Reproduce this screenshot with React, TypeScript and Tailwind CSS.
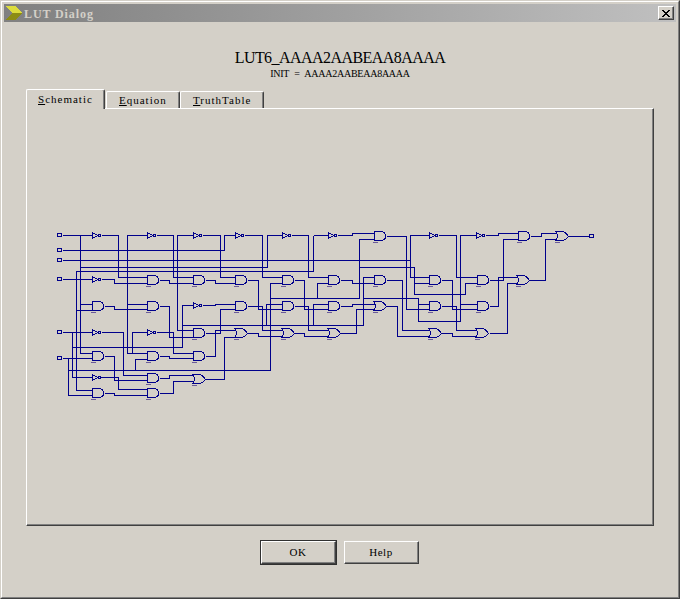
import React from 'react';

const serif = "font-['Liberation_Serif',serif]";

const wires = [
  '62,235 92,235', '80,235 80,353 92,353', '101,235 118,235 118,277 147,277',
  '62,250 224,250 224,235 235,235', '62,260 410,260', '429,235 410,235 410,277 429,277',
  '80,267 267,267 267,235 282,235', '313,235 313,271 76,271 76,390 92,390',
  '328,235 313,235', '62,279 92,279', '101,279 114,279 114,283 147,283',
  '147,235 127,235 127,353 147,353', '156,235 173,235 173,277 193,277',
  '193,235 177,235 177,330 193,330', '202,235 220,235 220,277 235,277',
  '159,280 169,280 169,283 193,283', '205,280 215,280 215,283 235,283',
  '80,304 92,304', '76,310 92,310', '104,306 114,306 114,309 147,309', '127,304 147,304',
  '159,306 169,306 169,337 193,337', '62,332 92,332', '72,332 72,377 92,377',
  '72,347 182,347 182,305 193,305', '101,332 123,332 123,375 147,375',
  '147,332 132,332 132,353', '156,332 173,332 173,353 193,353',
  '202,305 215,305 215,304 235,304', '205,333 220,333 220,309 235,309',
  '205,356 215,356 215,330 235,330', '205,379 224,379 224,337 235,337',
  '159,356 169,356 169,358 193,358', '104,356 114,356 114,380 147,380', '62,358 92,358',
  '68,358 68,395 92,395', '100,377 118,377 118,389 147,389', '104,393 114,393 114,395 147,395',
  '147,359 135,359 135,370', '67,370 270,370 270,283 282,283',
  '159,378 169,378 169,375 193,375', '159,393 173,393 173,381 193,381',
  '182,325 363,325 363,277 374,277', '244,235 262,235 262,277 282,277',
  '291,235 308,235 308,277 328,277', '337,235 352,235 352,233 374,233',
  '270,298 359,298', '374,239 359,239 359,298', '386,236 406,236 406,309 429,309',
  '358,267 414,267 414,294 465,294 465,283 477,283', '414,283 429,283',
  '247,280 258,280 258,309 282,309', '294,280 304,280 304,309 328,309',
  '340,280 352,280 352,283 374,283', '340,306 352,306 352,304 374,304',
  '247,306 262,306 262,330 282,330', '294,306 308,306 308,330 328,330',
  '266,325 266,304 282,304', '313,325 313,304 328,304', '317,298 317,283 328,283',
  '340,333 356,333 356,309 374,309', '294,333 304,333 304,336 328,336',
  '247,333 258,333 258,336 282,336', '386,306 397,306 397,336 429,336',
  '386,280 402,280 402,330 429,330', '363,298 418,298 418,321 460,321', '418,304 429,304',
  '438,235 456,235 456,277 477,277', '476,235 460,235 460,321', '460,304 477,304',
  '441,280 452,280 452,309 477,309', '441,306 456,306 456,330 477,330',
  '441,333 452,333 452,336 477,336', '485,235 498,235 498,233 518,233',
  '489,280 503,280 503,239 518,239', '489,306 498,306 498,277 517,277',
  '489,333 507,333 507,283 517,283', '529,280 545,280 545,239 555,239',
  '530,236 541,236 541,233 555,233', '568,236 589,236',
];

const andGates = [
  [147, 280], [193, 280], [235, 280], [282, 280], [328, 280], [374, 280], [429, 280], [477, 280],
  [374, 236], [518, 236], [92, 306], [147, 306], [235, 306], [282, 306], [328, 306], [429, 306],
  [477, 306], [193, 333], [92, 356], [147, 356], [193, 356], [147, 378], [92, 393], [147, 393],
];
const orGates = [
  [517, 280], [556, 236], [374, 306], [235, 333], [282, 333], [328, 333], [429, 333], [476, 333], [193, 379],
];
const inverters = [
  [92, 235], [147, 235], [193, 235], [235, 235], [282, 235], [328, 235], [429, 235], [476, 235],
  [92, 279], [193, 305], [92, 332], [147, 332], [92, 377],
];
const pads = [[57, 235], [57, 250], [57, 260], [57, 279], [57, 332], [57, 358], [589, 236]];

const Schematic = () => (
  <svg viewBox="27 109 626 416" className="block w-full h-full" fill="none" stroke="#00008b" strokeWidth="1" shapeRendering="crispEdges">
    <g transform="translate(0.5 0.5)">
      {wires.map((w) => <polyline key={w} points={w} />)}
      {pads.map(([x, y]) => <rect key={`${x}-${y}`} x={x} y={y - 2} width={4} height={3} fill="#d4d0c8" />)}
      {[...andGates, ...orGates].map(([x, y]) => (
        <line key={`m${x}-${y}`} x1={x - 2} y1={y + 6} x2={x + 3} y2={y + 6} stroke="#6a5a9a" />
      ))}
      {andGates.map(([x, y]) => (
        <path key={`a${x}-${y}`} d={`M${x} ${y - 5}H${x + 6}Q${x + 11} ${y - 5} ${x + 11} ${y}Q${x + 11} ${y + 4} ${x + 6} ${y + 4}H${x}Z`} fill="#d4d0c8" />
      ))}
      {orGates.map(([x, y]) => (
        <path key={`o${x}-${y}`} d={`M${x - 1} ${y - 5}H${x + 5}Q${x + 9} ${y - 5} ${x + 12} ${y}Q${x + 9} ${y + 4} ${x + 5} ${y + 4}H${x - 1}Q${x + 3} ${y} ${x - 1} ${y - 5}Z`} fill="#d4d0c8" />
      ))}
      {inverters.map(([x, y]) => (
        <g key={`i${x}-${y}`}>
          <path d={`M${x} ${y - 3}L${x + 5} ${y}L${x} ${y + 3}Z`} fill="#d4d0c8" />
          <circle cx={x + 7} cy={y} r={1.5} fill="#d4d0c8" />
        </g>
      ))}
    </g>
  </svg>
);

const bevel = 'border border-t-white border-l-white border-r-[#404040] border-b-[#404040] shadow-[inset_-1px_-1px_0_#808080]';

const Tab = ({ hot, rest, className }: { hot: string; rest: string; className: string }) => (
  <div
    className={`${className} flex items-center border-l border-t border-r border-t-white border-l-white border-r-[#404040] rounded-t-[2px] bg-[#d4d0c8] text-[11px] tracking-[1px] leading-none shadow-[inset_-1px_0_0_#808080]`}
  >
    <span><span className="underline">{hot}</span>{rest}</span>
  </div>
);

const DialogButton = ({ label, isDefault }: { label: string; isDefault?: boolean }) =>
  isDefault ? (
    <button className="w-[77px] h-[25px] border border-[#303030] bg-[#d4d0c8]">
      <span className={`${bevel} flex w-full h-full items-center justify-center text-[11px] tracking-[0.5px]`}>{label}</span>
    </button>
  ) : (
    <button className={`${bevel} w-[75px] h-[23px] bg-[#d4d0c8] text-[11px] tracking-[0.5px]`}>{label}</button>
  );

export default function App() {
  return (
    <div className={`${serif} w-[680px] h-[599px] bg-[#d4d0c8] text-black border border-t-[#d4d0c8] border-l-[#d4d0c8] border-r-[#404040] border-b-[#404040]`}>
      <div className="flex flex-col h-full border border-t-white border-l-white border-r-[#808080] border-b-[#808080] p-[2px]">
        <div className="flex items-center justify-between h-[18px] pl-[2px] pr-[2px] bg-gradient-to-r from-[#808080] to-[#c0c0c0]">
          <div className="flex items-center gap-[2px]">
            <svg width="16" height="16" viewBox="0 0 16 16" shapeRendering="crispEdges">
              <polygon points="0,1 9,1 16,8 6,8" fill="#dcdc3c" />
              <polygon points="6,8 16,8 9,15 0,15" fill="#8c8c14" />
            </svg>
            <span className="text-[12px] leading-none font-bold tracking-[0.9px] text-[#d4d0c8] pt-px">LUT Dialog</span>
          </div>
          <button className={`${bevel} flex items-center justify-center w-[16px] h-[14px] bg-[#d4d0c8]`}>
            <svg width="8" height="7" viewBox="0 0 8 7" stroke="#000" strokeWidth="1.4" shapeRendering="crispEdges">
              <path d="M0 0L8 7M8 0L0 7" />
            </svg>
          </button>
        </div>

        <div className="flex flex-col items-center pt-[27px] h-[67px]">
          <div className="text-[16px] tracking-[-0.55px] leading-[18px]">LUT6_AAAA2AABEAA8AAAA</div>
          <div className="text-[10px] tracking-[-0.25px] [word-spacing:3px] leading-[12px] mt-[1px]">INIT = AAAA2AABEAA8AAAA</div>
        </div>

        <div className="ml-[22px] flex items-end h-[20px] relative z-10 -mb-px">
          <Tab hot="S" rest="chematic" className="h-[20px] w-[79px] pl-[11px]" />
          <Tab hot="E" rest="quation" className="h-[17px] w-[74px] ml-[1px] pl-[12px] mb-px pt-px" />
          <Tab hot="T" rest="ruthTable" className="h-[17px] w-[84px] pl-[12px] mb-px pt-px" />
        </div>

        <div className={`${bevel} ml-[22px] w-[628px] h-[418px]`}>
          <Schematic />
        </div>

        <div className="flex items-center justify-center gap-[7px] mt-[14px] pr-[2px]">
          <DialogButton label="OK" isDefault />
          <DialogButton label="Help" />
        </div>
      </div>
    </div>
  );
}
